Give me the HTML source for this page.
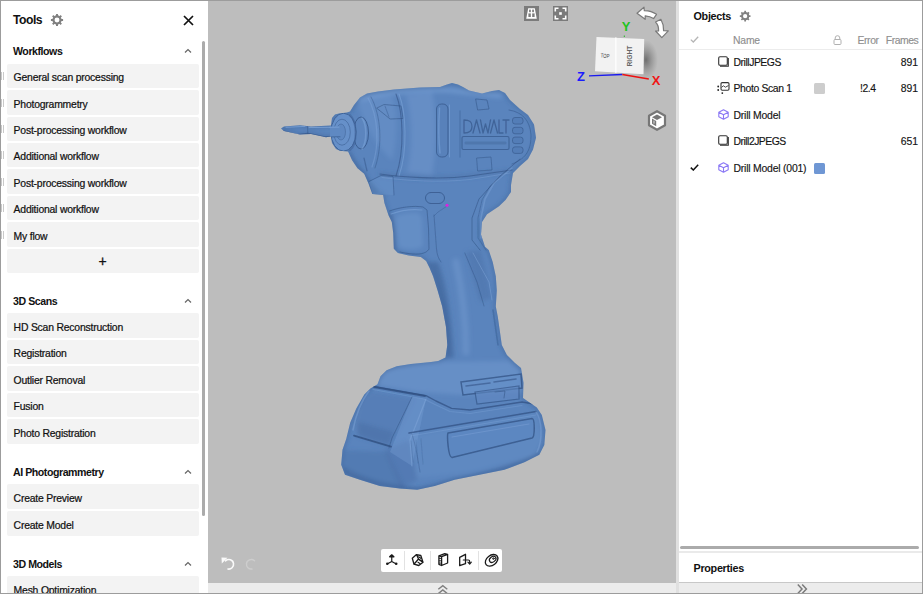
<!DOCTYPE html>
<html><head><meta charset="utf-8">
<style>
*{margin:0;padding:0;box-sizing:border-box}
html,body{width:923px;height:594px;overflow:hidden;background:#fff;font-family:"Liberation Sans",sans-serif;color:#1b1b1b}
.abs{position:absolute}
#frame{position:absolute;left:0;top:0;width:923px;height:594px;border:1px solid #9c9c9c;pointer-events:none;z-index:50}
#left{position:absolute;left:0;top:0;width:208px;height:594px;background:#fff}
.item{position:absolute;left:7px;width:192px;height:24.6px;background:#f3f3f3;border-radius:2px}
.item span{position:absolute;left:6.6px;top:8.6px;font-size:10.4px;letter-spacing:-0.2px;white-space:nowrap;color:#111;-webkit-text-stroke:0.22px #111}
.hdr{position:absolute;left:13px;font-size:10.6px;font-weight:bold;letter-spacing:-0.45px;color:#111;white-space:nowrap}
.chev{position:absolute;left:183.7px;width:8px;height:5px}
.item.noh:before{display:none}
.item:before{content:"";position:absolute;left:-6px;top:8.5px;width:3px;height:8px;border-left:1px solid #c9c9c9;border-right:1px solid #c9c9c9;box-sizing:border-box}
#vp{position:absolute;left:208px;top:0;width:468px;height:583px;background:#bdbdbd;overflow:hidden}
#vpbar{position:absolute;left:208px;top:583px;width:468px;height:11px;background:#ececec}
#divider{position:absolute;left:676px;top:0;width:3px;height:594px;background:#e0e0e0}
#right{position:absolute;left:679px;top:0;width:244px;height:594px;background:#fff}
.row{position:absolute;left:0;width:244px;height:26px}
.row .nm{position:absolute;left:54px;top:7px;font-size:10.4px;letter-spacing:-0.2px;white-space:nowrap;color:#1e1e1e}
.row .fr{position:absolute;right:6px;top:7px;font-size:10.4px;color:#1e1e1e}
</style></head>
<body>
<div id="left">
  <div class="abs" style="left:13px;top:13px;font-size:12.2px;font-weight:bold;letter-spacing:-0.5px;color:#111">Tools</div>
  <svg class="abs gear" style="left:49.9px;top:12.9px" width="14.00" height="14.00" viewBox="0 0 14 14"><circle cx="7" cy="7" r="3.55" fill="none" stroke="#808080" stroke-width="2.2"/><g fill="#808080"><rect x="6" y="0.9" width="2" height="3" rx="0.3" transform="rotate(0 7 7)"/><rect x="6" y="0.9" width="2" height="3" rx="0.3" transform="rotate(45 7 7)"/><rect x="6" y="0.9" width="2" height="3" rx="0.3" transform="rotate(90 7 7)"/><rect x="6" y="0.9" width="2" height="3" rx="0.3" transform="rotate(135 7 7)"/><rect x="6" y="0.9" width="2" height="3" rx="0.3" transform="rotate(180 7 7)"/><rect x="6" y="0.9" width="2" height="3" rx="0.3" transform="rotate(225 7 7)"/><rect x="6" y="0.9" width="2" height="3" rx="0.3" transform="rotate(270 7 7)"/><rect x="6" y="0.9" width="2" height="3" rx="0.3" transform="rotate(315 7 7)"/></g></svg>
  <svg class="abs" style="left:182.5px;top:14.6px" width="11" height="11" viewBox="0 0 11 11"><path d="M1 1L10 10M10 1L1 10" stroke="#111" stroke-width="1.7"/></svg>
  <div class="abs" style="left:202px;top:41px;width:3px;height:475px;background:#ababab;border-radius:2px"></div>

  <div class="hdr" style="top:45px">Workflows</div>
  <svg class="chev" style="top:48px" viewBox="0 0 8 5"><path d="M1 4.5L4 1.5L7 4.5" fill="none" stroke="#666" stroke-width="1.2"/></svg>
  <div class="item" style="top:63.6px"><span>General scan processing</span></div>
  <div class="item" style="top:90px"><span>Photogrammetry</span></div>
  <div class="item" style="top:116.5px"><span>Post-processing workflow</span></div>
  <div class="item" style="top:142.9px"><span>Additional workflow</span></div>
  <div class="item" style="top:169.3px"><span>Post-processing workflow</span></div>
  <div class="item" style="top:195.8px"><span>Additional workflow</span></div>
  <div class="item" style="top:222.2px"><span>My flow</span></div>
  <div class="item noh" style="top:248.6px"><span style="left:91.5px;top:4px;font-size:14px;-webkit-text-stroke:0.3px #141414">+</span></div>

  <div class="hdr" style="top:295px">3D Scans</div>
  <svg class="chev" style="top:298px" viewBox="0 0 8 5"><path d="M1 4.5L4 1.5L7 4.5" fill="none" stroke="#666" stroke-width="1.2"/></svg>
  <div class="item noh" style="top:313.2px"><span>HD Scan Reconstruction</span></div>
  <div class="item noh" style="top:339.7px"><span>Registration</span></div>
  <div class="item noh" style="top:366.2px"><span>Outlier Removal</span></div>
  <div class="item noh" style="top:392.7px"><span>Fusion</span></div>
  <div class="item noh" style="top:419.2px"><span>Photo Registration</span></div>

  <div class="hdr" style="top:466px">AI Photogrammetry</div>
  <svg class="chev" style="top:469px" viewBox="0 0 8 5"><path d="M1 4.5L4 1.5L7 4.5" fill="none" stroke="#666" stroke-width="1.2"/></svg>
  <div class="item noh" style="top:484.4px"><span>Create Preview</span></div>
  <div class="item noh" style="top:511px"><span>Create Model</span></div>

  <div class="hdr" style="top:558px">3D Models</div>
  <svg class="chev" style="top:561px" viewBox="0 0 8 5"><path d="M1 4.5L4 1.5L7 4.5" fill="none" stroke="#666" stroke-width="1.2"/></svg>
  <div class="item noh" style="top:576px"><span>Mesh Optimization</span></div>
</div>

<div id="vp">
<!--DRILL--><svg class="abs" style="left:0;top:0" width="468" height="583" viewBox="208 0 468 583"><defs><clipPath id="cp"><path d="M281,128.5 L284,126.5 L300,125.2 L311,126.5 L331,125.5 L332,118 L335,114.5 L339,113.5 L347,112.5 L350,111.5 L354,105 L360,97.5 L367,93.5 L378,91.5 L394,89.4 L420,87.4 L440,87 L447,84.5 L452,83 L458,84.5 L463,87 L469,90.6 L482,93.5 L492,91 L499,90 L505,93 L510,100 L520,109 L528,115 L534,124.5 L536,137.8 L533,149.5 L528,159 L520,166 L513,173 L511,185 L511,192 L505.5,200 L499,206.3 L487,214.3 L482,222 L481,234.5 L485,246.7 L488.7,250 L492.7,262 L495.8,276.3 L496.8,290.4 L495.8,306.6 L497.8,316.7 L499.8,330.8 L501.8,345 L506.9,355 L515,363 L521,368 L523.5,382.8 L523,398 L536.8,407.5 L541.8,415 L545.5,429.9 L544.3,444.9 L539.3,454.8 L524.4,462.3 L504.4,469.8 L479.5,474.8 L454.6,479.7 L434.7,486 L417.2,489.7 L399.8,488.5 L379.8,486 L359.9,479.7 L345,474.8 L341.2,464.8 L342.5,449.8 L346.2,438.9 L350.2,422.7 L356.3,408.6 L364.3,394.4 L370.4,388.4 L377.5,384.3 L380.5,376.3 L386.6,370.2 L396.7,366.2 L410.8,364.1 L431,362.1 L438.2,361.1 L445.5,357.5 L447.3,345 L446,327 L442.2,306.6 L437.6,290.4 L433.1,276.3 L429.5,267.7 L426.1,261 L420.8,256.9 L408.6,255.6 L397.9,252.9 L393.8,248.8 L393.2,232.7 L391.8,221.9 L388.5,215.2 L384.4,203.1 L383.1,195 L372.3,193.9 L368.3,183.1 L364.2,173.7 L357.5,168.3 L352.1,160.2 L348.1,151.4 L340,150.8 L336,149 L332,143 L331,136.6 L326,137.2 L311,134 L300,134.6 L284,131Z"/></clipPath><filter id="bl2" x="-10%" y="-10%" width="120%" height="120%"><feGaussianBlur stdDeviation="2"/></filter><filter id="bl0" x="-10%" y="-10%" width="120%" height="120%"><feGaussianBlur stdDeviation="0.45"/></filter></defs><path d="M281,128.5 L284,126.5 L300,125.2 L311,126.5 L331,125.5 L332,118 L335,114.5 L339,113.5 L347,112.5 L350,111.5 L354,105 L360,97.5 L367,93.5 L378,91.5 L394,89.4 L420,87.4 L440,87 L447,84.5 L452,83 L458,84.5 L463,87 L469,90.6 L482,93.5 L492,91 L499,90 L505,93 L510,100 L520,109 L528,115 L534,124.5 L536,137.8 L533,149.5 L528,159 L520,166 L513,173 L511,185 L511,192 L505.5,200 L499,206.3 L487,214.3 L482,222 L481,234.5 L485,246.7 L488.7,250 L492.7,262 L495.8,276.3 L496.8,290.4 L495.8,306.6 L497.8,316.7 L499.8,330.8 L501.8,345 L506.9,355 L515,363 L521,368 L523.5,382.8 L523,398 L536.8,407.5 L541.8,415 L545.5,429.9 L544.3,444.9 L539.3,454.8 L524.4,462.3 L504.4,469.8 L479.5,474.8 L454.6,479.7 L434.7,486 L417.2,489.7 L399.8,488.5 L379.8,486 L359.9,479.7 L345,474.8 L341.2,464.8 L342.5,449.8 L346.2,438.9 L350.2,422.7 L356.3,408.6 L364.3,394.4 L370.4,388.4 L377.5,384.3 L380.5,376.3 L386.6,370.2 L396.7,366.2 L410.8,364.1 L431,362.1 L438.2,361.1 L445.5,357.5 L447.3,345 L446,327 L442.2,306.6 L437.6,290.4 L433.1,276.3 L429.5,267.7 L426.1,261 L420.8,256.9 L408.6,255.6 L397.9,252.9 L393.8,248.8 L393.2,232.7 L391.8,221.9 L388.5,215.2 L384.4,203.1 L383.1,195 L372.3,193.9 L368.3,183.1 L364.2,173.7 L357.5,168.3 L352.1,160.2 L348.1,151.4 L340,150.8 L336,149 L332,143 L331,136.6 L326,137.2 L311,134 L300,134.6 L284,131Z" fill="#5a84bd"/><g clip-path="url(#cp)"><g filter="url(#bl2)"><path d="M281,128.5 L284,126.5 L300,125.2 L311,126.5 L331,125.5 L332,118 L335,114.5 L339,113.5 L347,112.5 L350,111.5 L354,105 L360,97.5 L367,93.5 L378,91.5 L394,89.4 L420,87.4 L440,87 L447,84.5 L452,83 L458,84.5 L463,87 L469,90.6 L482,93.5 L492,91 L499,90 L505,93 L510,100 L520,109 L528,115 L534,124.5 L536,137.8 L533,149.5 L528,159 L520,166 L513,173 L511,185 L511,192 L505.5,200 L499,206.3 L487,214.3 L482,222 L481,234.5 L485,246.7 L488.7,250 L492.7,262 L495.8,276.3 L496.8,290.4 L495.8,306.6 L497.8,316.7 L499.8,330.8 L501.8,345 L506.9,355 L515,363 L521,368 L523.5,382.8 L523,398 L536.8,407.5 L541.8,415 L545.5,429.9 L544.3,444.9 L539.3,454.8 L524.4,462.3 L504.4,469.8 L479.5,474.8 L454.6,479.7 L434.7,486 L417.2,489.7 L399.8,488.5 L379.8,486 L359.9,479.7 L345,474.8 L341.2,464.8 L342.5,449.8 L346.2,438.9 L350.2,422.7 L356.3,408.6 L364.3,394.4 L370.4,388.4 L377.5,384.3 L380.5,376.3 L386.6,370.2 L396.7,366.2 L410.8,364.1 L431,362.1 L438.2,361.1 L445.5,357.5 L447.3,345 L446,327 L442.2,306.6 L437.6,290.4 L433.1,276.3 L429.5,267.7 L426.1,261 L420.8,256.9 L408.6,255.6 L397.9,252.9 L393.8,248.8 L393.2,232.7 L391.8,221.9 L388.5,215.2 L384.4,203.1 L383.1,195 L372.3,193.9 L368.3,183.1 L364.2,173.7 L357.5,168.3 L352.1,160.2 L348.1,151.4 L340,150.8 L336,149 L332,143 L331,136.6 L326,137.2 L311,134 L300,134.6 L284,131Z" fill="none" stroke="#34568a" stroke-width="3" opacity="0.45" stroke-linecap="round" stroke-linejoin="round"/><path d="M360,100 C380,92 420,90 445,90 L500,96" fill="none" stroke="#86acdf" stroke-width="4" opacity="0.45" stroke-linecap="round" stroke-linejoin="round"/><path d="M406,95 C412,115 413,150 407,172 L432,175 C437,150 437,112 432,92Z" fill="#86acdf" opacity="0.25"/><path d="M358,104 C366,96 380,94 392,96 C398,110 398,140 392,160 C380,150 366,130 358,104Z" fill="#86acdf" opacity="0.2"/><path d="M350,152 C358,165 368,180 380,192 L372,194 C365,180 356,168 348,152Z" fill="#3a5c90" opacity="0.5"/><path d="M380,174 C410,179 450,180 510,171" fill="none" stroke="#3b5e93" stroke-width="3" opacity="0.35" stroke-linecap="round" stroke-linejoin="round"/><path d="M396,216 C404,213 412,212 419,213 L422,218 L423,246 C418,250 406,250 399,247 L397,232Z" fill="#8ab0e2" opacity="0.22"/><path d="M390,214 L393,232 L394,249" fill="none" stroke="#2f4f80" stroke-width="2.5" opacity="0.5" stroke-linecap="round" stroke-linejoin="round"/><path d="M428,262 C436,280 442,310 446,358 L454,358 C452,320 447,285 438,262Z" fill="#3c5e93" opacity="0.55"/><path d="M456,262 C462,290 466,320 466,352" fill="none" stroke="#86acdf" stroke-width="7" opacity="0.28" stroke-linecap="round" stroke-linejoin="round"/><path d="M466,252 L480,302 L492,298 L481,250Z" fill="#4a70a7" opacity="0.5"/><path d="M384,372 C398,366 425,363 446,362 L508,361 L521,372 L522,392 L462,395 L420,392 L376,385Z" fill="#86acdf" opacity="0.28"/><path d="M372,392 L414,399 L398,430 L389,446 L358,436 L355,426 C357,412 363,398 372,392Z" fill="#3d5f95" opacity="0.15"/><path d="M358,422 L394,432 L389,446 L358,436Z" fill="#3d5f95" opacity="0.3"/><path d="M342,450 L388,452 L405,488 L360,480 L343,472Z" fill="#456aa0" opacity="0.35"/><path d="M410,436 L536,414 L542,440 L534,456 L470,472 L416,478Z" fill="#86acdf" opacity="0.12"/><path d="M384,450 L410,440 L418,480 L400,488Z" fill="#3f6197" opacity="0.25"/><path d="M345,470 C360,480 390,488 420,490 C450,484 500,472 540,455" fill="none" stroke="#34568a" stroke-width="4" opacity="0.35" stroke-linecap="round" stroke-linejoin="round"/></g><g filter="url(#bl0)"><path d="M282,130.5 L297,134.5 L308,133.4 L326,137 L340,136.7" fill="none" stroke="#2f4f80" stroke-width="1.2" opacity="0.6" stroke-linecap="round" stroke-linejoin="round"/><path d="M286,127.3 L305,126.4 M309,127.6 L336,127.2" fill="none" stroke="#86acdf" stroke-width="1" opacity="0.65" stroke-linecap="round" stroke-linejoin="round"/><path d="M307.5,126 L307.8,134" fill="none" stroke="#2f4f80" stroke-width="0.8" opacity="0.5" stroke-linecap="round" stroke-linejoin="round"/><ellipse cx="361" cy="133" rx="7.5" ry="16" fill="#5d86bf" stroke="#2f4f80" stroke-width="0.9" opacity="0.8"/><path d="M362,118 C367,125 367,142 362,149" fill="none" stroke="#86acdf" stroke-width="1.5" opacity="0.45" stroke-linecap="round" stroke-linejoin="round"/><ellipse cx="343.5" cy="132.2" rx="12.6" ry="19" fill="#6690c9" stroke="#3a5d92" stroke-width="0.9"/><path d="M350,115 C357,121 358,144 350,150" fill="none" stroke="#3f6399" stroke-width="2" opacity="0.55" stroke-linecap="round" stroke-linejoin="round"/><ellipse cx="342" cy="132.2" rx="8.3" ry="13" fill="none" stroke="#2f4f80" stroke-width="0.8" opacity="0.55"/><ellipse cx="341" cy="132" rx="4.5" ry="8" fill="#5a83bc" stroke="#2f4f80" stroke-width="0.6" opacity="0.6"/><path d="M330,126.6 L340,126.2 L341,136.8 L330,137.2Z" fill="#5f89c2"/><path d="M326,137 L340,136.8" fill="none" stroke="#2f4f80" stroke-width="1.1" opacity="0.55" stroke-linecap="round" stroke-linejoin="round"/><path d="M330,127.3 L339,127.1" fill="none" stroke="#86acdf" stroke-width="1" opacity="0.6" stroke-linecap="round" stroke-linejoin="round"/><path d="M377,108 L384,104.5 L401,106 L403,118.5 L390,119 L384,114Z" fill="none" stroke="#2f4f80" stroke-width="1" opacity="0.5" stroke-linecap="round" stroke-linejoin="round"/><path d="M385,106 L389,117" fill="none" stroke="#2f4f80" stroke-width="0.9" opacity="0.4" stroke-linecap="round" stroke-linejoin="round"/><path d="M371,97 C381,115 383,145 375,168" fill="none" stroke="#2f4f80" stroke-width="1" opacity="0.4" stroke-linecap="round" stroke-linejoin="round"/><path d="M368,98 C378,116 380,145 372,167" fill="none" stroke="#86acdf" stroke-width="1.3" opacity="0.35" stroke-linecap="round" stroke-linejoin="round"/><path d="M396,94 C403,112 405,150 396,176" fill="none" stroke="#2f4f80" stroke-width="1.1" opacity="0.55" stroke-linecap="round" stroke-linejoin="round"/><path d="M399,94 C406,112 408,150 399,176" fill="none" stroke="#86acdf" stroke-width="1.1" opacity="0.45" stroke-linecap="round" stroke-linejoin="round"/><rect x="436.5" y="104" width="11.5" height="53" rx="5" fill="#5780b9" stroke="#2f4f80" stroke-width="0.9" opacity="0.7"/><path d="M439.5,108 C438.5,125 438.5,140 440,153" fill="none" stroke="#86acdf" stroke-width="1.5" opacity="0.45" stroke-linecap="round" stroke-linejoin="round"/><path d="M449.5,105 L449.5,157" fill="none" stroke="#86acdf" stroke-width="1" opacity="0.45" stroke-linecap="round" stroke-linejoin="round"/><path d="M460,111 L460,157" fill="none" stroke="#2f4f80" stroke-width="0.9" opacity="0.45" stroke-linecap="round" stroke-linejoin="round"/><path d="M476,99 L487,100 L489,109 L478,110Z" fill="none" stroke="#2f4f80" stroke-width="0.9" opacity="0.55" stroke-linecap="round" stroke-linejoin="round"/><path d="M464,120 L464,133 C470,133 472,130 472,126.5 C472,122 470,120 464,120 M473,133 L476.5,120 L480,133 M480.5,120 L483,133 L485.5,124 L488,133 L490.5,120 M490.5,133 L494,120 L497.5,133 M499,120 L499,133 L503,133 M503,120 L509,120 M506,120 L506,133" fill="none" stroke="#2f4f80" stroke-width="1.3" opacity="0.6" stroke-linecap="round" stroke-linejoin="round"/><rect x="462" y="136.5" width="47" height="13" rx="1.5" fill="none" stroke="#2f4f80" stroke-width="1.1" opacity="0.6"/><path d="M466,143 L505,143" fill="none" stroke="#2f4f80" stroke-width="3" opacity="0.25" stroke-linecap="round" stroke-linejoin="round"/><rect x="512.5" y="117.5" width="10.5" height="6.5" rx="2.5" fill="#5079b2" stroke="#2f4f80" stroke-width="0.9" opacity="0.6"/><rect x="512.5" y="127.3" width="10.5" height="6.5" rx="2.5" fill="#5079b2" stroke="#2f4f80" stroke-width="0.9" opacity="0.6"/><rect x="512.5" y="137.1" width="10.5" height="6.5" rx="2.5" fill="#5079b2" stroke="#2f4f80" stroke-width="0.9" opacity="0.6"/><rect x="512.5" y="146.9" width="10.5" height="6.5" rx="2.5" fill="#5079b2" stroke="#2f4f80" stroke-width="0.9" opacity="0.6"/><path d="M509,110 C522,112 530,120 531,135 C531,148 528,158 512,164" fill="none" stroke="#2f4f80" stroke-width="0.9" opacity="0.5" stroke-linecap="round" stroke-linejoin="round"/><path d="M380,174 C400,177 440,180 470,176 L512,170" fill="none" stroke="#2f4f80" stroke-width="1.1" opacity="0.55" stroke-linecap="round" stroke-linejoin="round"/><path d="M382,177.5 C405,180.5 440,183 470,179.5 L510,173" fill="none" stroke="#86acdf" stroke-width="1" opacity="0.35" stroke-linecap="round" stroke-linejoin="round"/><path d="M369,182 L381,176 L393,177 L394,195 L373,194Z" fill="#739bd2" opacity="0.3"/><path d="M369,181.5 L381,175.5 L393,176.5 L394,195" fill="none" stroke="#2f4f80" stroke-width="1" opacity="0.45" stroke-linecap="round" stroke-linejoin="round"/><path d="M364,158 L367,171" fill="none" stroke="#2f4f80" stroke-width="1.2" opacity="0.45" stroke-linecap="round" stroke-linejoin="round"/><path d="M477,158 L491,157 L492,170 L478,171Z" fill="none" stroke="#2f4f80" stroke-width="0.9" opacity="0.5" stroke-linecap="round" stroke-linejoin="round"/><rect x="425.5" y="192.5" width="19" height="11" rx="5.5" fill="#5b84bd" stroke="#2f4f80" stroke-width="1" opacity="0.65"/><path d="M389.5,211 C400,207 414,205.5 423,207 L427,210 L428.5,228 L429,249 C426,254 418,256 400,252" fill="none" stroke="#2f4f80" stroke-width="1" opacity="0.5" stroke-linecap="round" stroke-linejoin="round"/><path d="M391,214 C402,210 414,209 422,210" fill="none" stroke="#86acdf" stroke-width="1.2" opacity="0.45" stroke-linecap="round" stroke-linejoin="round"/><path d="M434,215 L436.5,249 C437,254 438,258 441,262" fill="none" stroke="#2f4f80" stroke-width="0.9" opacity="0.45" stroke-linecap="round" stroke-linejoin="round"/><path d="M446.5,206.5 L438,212 L434,216" fill="none" stroke="#2f4f80" stroke-width="0.8" opacity="0.4" stroke-linecap="round" stroke-linejoin="round"/><path d="M520,159 L500,176 L479,199 L472,218 L472,240 L480,250" fill="none" stroke="#2f4f80" stroke-width="1" opacity="0.5" stroke-linecap="round" stroke-linejoin="round"/><path d="M507,171 L490,186 L482,200 L478,218 L478,238 L486,250" fill="none" stroke="#2f4f80" stroke-width="0.9" opacity="0.4" stroke-linecap="round" stroke-linejoin="round"/><path d="M512,168 L494,183 L485,199 L481,218 L481,238" fill="none" stroke="#86acdf" stroke-width="1.6" opacity="0.35" stroke-linecap="round" stroke-linejoin="round"/><path d="M464.8,253 L477,282 L484,306" fill="none" stroke="#2f4f80" stroke-width="0.9" opacity="0.45" stroke-linecap="round" stroke-linejoin="round"/><path d="M473,253 L489,282 L492,300" fill="none" stroke="#86acdf" stroke-width="1" opacity="0.4" stroke-linecap="round" stroke-linejoin="round"/><path d="M493,310 L498,345" fill="none" stroke="#2f4f80" stroke-width="1.5" opacity="0.35" stroke-linecap="round" stroke-linejoin="round"/><path d="M371,386 L426,395.6 L436,401 L451.6,408.4 L470,410 L522,402 L540,405" fill="none" stroke="#2f4f80" stroke-width="1.4" opacity="0.7" stroke-linecap="round" stroke-linejoin="round"/><path d="M373,389.5 L424,399 L434,404 L450,411.5 L470,413.5 L522,405.5" fill="none" stroke="#86acdf" stroke-width="1.1" opacity="0.3" stroke-linecap="round" stroke-linejoin="round"/><path d="M461,382 L521,374 L522,388 L463,395Z" fill="#668fc8" stroke="#2f4f80" stroke-width="1.5" opacity="0.7"/><path d="M466,386 L490,383 M494,382 L516,379" fill="none" stroke="#2f4f80" stroke-width="1.6" opacity="0.55" stroke-linecap="round" stroke-linejoin="round"/><path d="M475,392 L519,386 L519,399 L477,404Z" fill="#5f88c1" stroke="#2f4f80" stroke-width="1.2" opacity="0.6"/><path d="M495,392 L505,391 L504,398" fill="none" stroke="#2f4f80" stroke-width="1" opacity="0.5" stroke-linecap="round" stroke-linejoin="round"/><path d="M374,387 L425,396" fill="none" stroke="#2f4f80" stroke-width="1.8" opacity="0.75" stroke-linecap="round" stroke-linejoin="round"/><path d="M354,435.6 L391,446.7" fill="none" stroke="#2f4f80" stroke-width="1.8" opacity="0.8" stroke-linecap="round" stroke-linejoin="round"/><path d="M369,391 C362,400 356,414 353,430" fill="none" stroke="#86acdf" stroke-width="1.5" opacity="0.4" stroke-linecap="round" stroke-linejoin="round"/><path d="M412,397 L426,399 L412,466 L390,452Z" fill="#7ea5da" opacity="0.3"/><path d="M426,399 L410,440 L412,466" fill="none" stroke="#86acdf" stroke-width="1.2" opacity="0.4" stroke-linecap="round" stroke-linejoin="round"/><path d="M412,397 L392,438 L389,448" fill="none" stroke="#2f4f80" stroke-width="1" opacity="0.45" stroke-linecap="round" stroke-linejoin="round"/><path d="M412,434 C416,446 418,460 420,472" fill="none" stroke="#2f4f80" stroke-width="0.9" opacity="0.35" stroke-linecap="round" stroke-linejoin="round"/><path d="M409,433 L536,411.5" fill="none" stroke="#2f4f80" stroke-width="1.6" opacity="0.7" stroke-linecap="round" stroke-linejoin="round"/><path d="M410,436 L536,415" fill="none" stroke="#86acdf" stroke-width="1" opacity="0.3" stroke-linecap="round" stroke-linejoin="round"/><path d="M448,433 L532,418.5 C535,418.5 535,437 532,438 L452,457.5 C448,457.5 447,435 448,433Z" fill="#5d87c0" stroke="#2f4f80" stroke-width="1.5" opacity="0.7"/><path d="M452,437 L529,424" fill="none" stroke="#86acdf" stroke-width="1" opacity="0.35" stroke-linecap="round" stroke-linejoin="round"/><path d="M411,441 L413,462 M416,440 L418,463 M421,439 L423,464" fill="none" stroke="#2f4f80" stroke-width="0.8" opacity="0.25" stroke-linecap="round" stroke-linejoin="round"/><path d="M536,412 C542,420 543,440 537,452" fill="none" stroke="#86acdf" stroke-width="1.5" opacity="0.35" stroke-linecap="round" stroke-linejoin="round"/></g></g><circle cx="447" cy="205.3" r="1.5" fill="#e020e0"/></svg><!--/DRILL-->
<!--OVL-->
<svg class="abs" style="left:316px;top:6px" width="15" height="15" viewBox="0 0 15 15"><rect width="15" height="15" fill="#7b7b7b"/><path d="M4.2 2.2H10.8L12.8 12.8H2.2Z" fill="#fff"/><rect x="5.1" y="3.6" width="1.7" height="2.6" fill="#7b7b7b"/><rect x="8.2" y="3.6" width="1.7" height="2.6" fill="#7b7b7b"/><rect x="4.4" y="7.4" width="2.4" height="3.6" fill="#7b7b7b"/><rect x="8.2" y="7.4" width="2.4" height="3.6" fill="#7b7b7b"/></svg>
<svg class="abs" style="left:345px;top:6px" width="15" height="15" viewBox="0 0 15 15"><rect width="15" height="15" fill="#7b7b7b"/><path d="M2.300 5.500V2.300H5.500M9.500 2.300H12.700V5.500M12.700 9.500V12.700H9.500M5.500 12.700H2.300V9.500" fill="none" stroke="#fff" stroke-width="1.600"/><rect x="6.200" y="6.200" width="2.600" height="2.600" fill="#fff"/></svg>
<svg class="abs" style="left:360px;top:0px" width="108" height="95" viewBox="568 0 108 95">
 <defs><radialGradient id="shd" cx="0.5" cy="0.5" r="0.5"><stop offset="0" stop-color="#555" stop-opacity="0.75"/><stop offset="1" stop-color="#777" stop-opacity="0"/></radialGradient></defs>
 <ellipse cx="646" cy="60" rx="12" ry="20" fill="url(#shd)"/>
 <path d="M596.5,37 L644.2,39.1 L643.5,74.2 L595,71.2Z" fill="#f2f2f2"/>
 <path d="M615.8,37.6 L615.8,72.8" stroke="#fcfcfc" stroke-width="1.6"/>
 <text x="605" y="57.8" font-size="6" fill="#444" text-anchor="middle" font-family="Liberation Sans" textLength="9" lengthAdjust="spacingAndGlyphs" transform="rotate(4 605 57)">TOP</text>
 <text x="0" y="0" font-size="6.8" font-weight="bold" fill="#666" text-anchor="middle" font-family="Liberation Sans" textLength="21" lengthAdjust="spacingAndGlyphs" transform="translate(632.3 56) rotate(-90)">RIGHT</text>
 <path d="M589,75.8 L622.3,74.5" stroke="#1a1af0" stroke-width="1.3"/>
 <path d="M622.3,74.5 L648.8,79" stroke="#ee1111" stroke-width="1.3"/>
 <path d="M624.3,35.5 L624.3,37" stroke="#22bb22" stroke-width="1"/>
 <text x="626" y="30.8" font-size="13" font-weight="bold" fill="#1ec31e" text-anchor="middle" font-family="Liberation Sans">Y</text>
 <text x="581" y="80.7" font-size="13" font-weight="bold" fill="#1b1bff" text-anchor="middle" font-family="Liberation Sans">Z</text>
 <text x="656" y="85.2" font-size="13" font-weight="bold" fill="#f01515" text-anchor="middle" font-family="Liberation Sans">X</text>
 <path d="M637,13.2 L644,7.2 L644.3,10.6 C649,10.8 653.500,12.200 656.500,14.300 L653.600,18.600 C651,16.800 648.300,16 645.200,15.800 L645.200,19.300Z" fill="#fff" stroke="#7a7a7a" stroke-width="1.2" stroke-linejoin="round"/>
 <path d="M655.600,22 L660.900,19.300 C662.800,22.800 663.800,26.800 663.600,30.700 L668.300,30.900 L661.800,37.600 L655.600,31 L658.600,30.900 C658.700,27.500 657.800,24.300 655.600,22Z" fill="#fff" stroke="#7a7a7a" stroke-width="1.2" stroke-linejoin="round"/>
</svg>
<svg class="abs" style="left:439px;top:110px" width="20" height="21" viewBox="0 0 20 21"><path d="M10 1.200L18 5.800V15.200L10 19.800L2 15.200V5.800Z" fill="#fff" stroke="#777" stroke-width="2.200" stroke-linejoin="round"/><path d="M10 4.500L15 7.300L10 10L5 7.300Z" fill="#777"/><path d="M5 8.600L9.200 11V16.200L5 13.800Z" fill="#777"/><rect x="6" y="10.600" width="2" height="3" fill="#aaa"/></svg>
<svg class="abs" style="left:12px;top:556px" width="16" height="15" viewBox="0 0 16 15"><path d="M5.500 4.800 C8.500 2.300 13 3.800 13.500 7.500 C14 11 11 13.500 8 13" fill="none" stroke="#fafafa" stroke-width="1.600" stroke-linecap="round"/><path d="M1.500 1.500L7.500 1.800L1.800 7.500Z" fill="#fafafa"/></svg>
<svg class="abs" style="left:35.5px;top:556px" width="16" height="15" viewBox="0 0 16 15"><path d="M10.500 4.800 C7.500 2.300 3 3.800 2.500 7.500 C2 11 5 13.500 8 13" fill="none" stroke="#cdcdcd" stroke-width="1.400" stroke-linecap="round"/></svg>
<div class="abs" style="left:173px;top:549px;width:121px;height:23px;background:#fff;border-radius:2px"></div>
<div class="abs" style="left:196px;top:551px;width:1px;height:19px;background:#e2e2e2"></div>
<div class="abs" style="left:222px;top:551px;width:1px;height:19px;background:#e2e2e2"></div>
<div class="abs" style="left:270px;top:551px;width:1px;height:19px;background:#e2e2e2"></div>
<svg class="abs" style="left:173px;top:549px" width="121" height="23" viewBox="0 0 121 23">
 <g fill="none" stroke="#1a1a1a" stroke-width="1.200" stroke-linecap="round" stroke-linejoin="round">
  <path d="M10.750 7.200V12.400L6.600 14.700 M10.750 12.400L14.900 14.700"/>
  <path d="M8.600 7.800L10.750 5.800L12.900 7.800Z" fill="#1a1a1a"/>
  <circle cx="6.300" cy="14.800" r="1.300" fill="#1a1a1a" stroke="none"/><circle cx="15.200" cy="14.800" r="1.300" fill="#1a1a1a" stroke="none"/>
  <path d="M31.300 9.200L35.500 5.600L39.800 6.500L42 13.300L37.800 16.500L33 15.200Z M35.500 5.600L37.500 10 L42 13.300 M37.500 10L33 15.200" stroke-width="1.300"/>
  <path d="M37.600 7.800L39.700 9.300 M38.500 10.800L40.600 12.400 M37 13.300L39.200 14.700" stroke-width="1.100"/>
  <path d="M60.600 7.700L66.600 5.300V14L60.600 16.500Z M57.900 6.900L63.800 4.700L66.600 5.300 M57.900 6.900L60.600 7.700 M57.900 6.900V15.300L60.600 16.500" stroke-width="1.300"/>
  <path d="M58.400 9.400H60 M58.400 11.800H60 M58.400 14.100H60" stroke-width="0.900"/>
  <path d="M78.700 8.300L84.500 5.300V14.700L78.700 16.700Z" stroke-width="1.300"/>
  <path d="M82.300 11H87.300C88.300 11 88.700 11.600 88.700 12.600V14" stroke-width="1.200"/>
  <path d="M86.900 13.200L88.700 15L90.300 13.200" stroke-width="1.200"/>
  <ellipse cx="110.600" cy="11.300" rx="7" ry="4.900" transform="rotate(-38 110.600 11.300)" stroke-width="1.300"/>
  <ellipse cx="111.700" cy="10.300" rx="3.600" ry="2.600" transform="rotate(-38 111.700 10.300)" stroke-width="1.200"/>
  <circle cx="112.400" cy="9.600" r="0.800" stroke-width="1"/>
 </g>
</svg>
<!--/OVL-->
</div>
<div id="vpbar">
  <svg class="abs" style="left:228.5px;top:0.5px" width="12" height="11" viewBox="0 0 12 11"><path d="M1.3 5.3L5.8 1.6L10.3 5.3M1.3 9.6L5.8 5.9L10.3 9.6" fill="none" stroke="#808080" stroke-width="1.4"/></svg>
</div>
<div id="divider"></div>

<div id="right">
  <div class="abs" style="left:14.5px;top:9.5px;font-size:10.8px;font-weight:bold;letter-spacing:-0.3px;color:#111">Objects</div>
  <svg class="abs gear" style="left:60.2px;top:9.6px" width="12.3" height="12.3" viewBox="0 0 14 14"><circle cx="7" cy="7" r="3.55" fill="none" stroke="#808080" stroke-width="2.2"/><g fill="#808080"><rect x="6" y="0.9" width="2" height="3" rx="0.3" transform="rotate(0 7 7)"/><rect x="6" y="0.9" width="2" height="3" rx="0.3" transform="rotate(45 7 7)"/><rect x="6" y="0.9" width="2" height="3" rx="0.3" transform="rotate(90 7 7)"/><rect x="6" y="0.9" width="2" height="3" rx="0.3" transform="rotate(135 7 7)"/><rect x="6" y="0.9" width="2" height="3" rx="0.3" transform="rotate(180 7 7)"/><rect x="6" y="0.9" width="2" height="3" rx="0.3" transform="rotate(225 7 7)"/><rect x="6" y="0.9" width="2" height="3" rx="0.3" transform="rotate(270 7 7)"/><rect x="6" y="0.9" width="2" height="3" rx="0.3" transform="rotate(315 7 7)"/></g></svg>
  <svg class="abs" style="left:11px;top:36px" width="9" height="7" viewBox="0 0 9 7"><path d="M0.8 3.6L3.3 6L8.2 0.8" fill="none" stroke="#b5b5b5" stroke-width="1.3"/></svg>
  <div class="abs" style="left:54px;top:35px;font-size:10.4px;color:#8f8f8f;-webkit-text-stroke:0.15px #8f8f8f;letter-spacing:-0.2px">Name</div>
  <svg class="abs" style="left:154px;top:35px" width="9" height="10" viewBox="0 0 9 10"><path d="M2.2 4.5V3a2.300 2.300 0 0 1 4.600 0V4.500" fill="none" stroke="#b0b0b0" stroke-width="1"/><rect x="1" y="4.500" width="7" height="5" rx="1" fill="none" stroke="#b0b0b0" stroke-width="1"/></svg>
  <div class="abs" style="left:178.5px;top:35px;font-size:10.4px;color:#8f8f8f;-webkit-text-stroke:0.15px #8f8f8f;letter-spacing:-0.4px">Error</div>
  <div class="abs" style="left:206.8px;top:35px;font-size:10.4px;color:#8f8f8f;-webkit-text-stroke:0.15px #8f8f8f;letter-spacing:-0.45px">Frames</div>
  <div class="abs" style="left:0;top:49px;width:244px;height:1px;background:#ececec"></div>

  <svg class="abs" style="left:39px;top:56px" width="12" height="11" viewBox="0 0 12 11"><rect x="0.7" y="0.7" width="8.600" height="8.600" rx="1.300" fill="#fff" stroke="#333" stroke-width="1.1"/><path d="M2 10.3H10.3V2" fill="none" stroke="#333" stroke-width="1.100"/></svg>
  <div class="abs nm" style="left:54.5px;top:56.5px;font-size:10.4px;color:#141414;-webkit-text-stroke:0.15px #141414;letter-spacing:-0.45px">DrillJPEGS</div>
  <div class="abs" style="right:5px;top:56.5px;font-size:10.4px;color:#141414;-webkit-text-stroke:0.15px #141414">891</div>

  <svg class="abs" style="left:38px;top:82px" width="13" height="12" viewBox="0 0 13 12"><circle cx="1.200" cy="4.500" r="0.900" fill="#222"/><circle cx="1.200" cy="8" r="0.900" fill="#222"/><circle cx="5.300" cy="11.100" r="0.900" fill="#222"/><rect x="4" y="0.600" width="8" height="7.600" rx="1.200" fill="none" stroke="#333" stroke-width="1.100"/><path d="M4.500 5.500L6.300 3.800L8.500 5.200L11.500 3.500" fill="none" stroke="#333" stroke-width="0.9"/></svg>
  <div class="abs" style="left:54.5px;top:83px;font-size:10.4px;color:#141414;-webkit-text-stroke:0.15px #141414;letter-spacing:-0.35px">Photo Scan 1</div>
  <div class="abs" style="left:135px;top:83px;width:11px;height:11px;background:#cdcdcd;border-radius:1.500px"></div>
  <div class="abs" style="left:181px;top:83px;font-size:10.4px;color:#141414;-webkit-text-stroke:0.15px #141414;letter-spacing:-0.4px">!2.4</div>
  <div class="abs" style="right:5px;top:83px;font-size:10.4px;color:#141414;-webkit-text-stroke:0.15px #141414">891</div>

  <svg class="abs" style="left:39px;top:109px" width="11" height="11" viewBox="0 0 11 11"><path d="M5.5 0.700L10.200 3.200V7.800L5.500 10.300L0.800 7.800V3.200Z M0.800 3.200L5.500 5.700L10.200 3.200 M5.500 5.700V10.300" fill="none" stroke="#8b78f5" stroke-width="1.100" stroke-linejoin="round"/></svg>
  <div class="abs" style="left:54.5px;top:109.5px;font-size:10.4px;color:#141414;-webkit-text-stroke:0.15px #141414;letter-spacing:-0.2px">Drill Model</div>

  <svg class="abs" style="left:39px;top:135px" width="12" height="11" viewBox="0 0 12 11"><rect x="0.7" y="0.7" width="8.600" height="8.600" rx="1.300" fill="#fff" stroke="#333" stroke-width="1.1"/><path d="M2 10.3H10.3V2" fill="none" stroke="#333" stroke-width="1.100"/></svg>
  <div class="abs" style="left:54.5px;top:136px;font-size:10.4px;color:#141414;-webkit-text-stroke:0.15px #141414;letter-spacing:-0.5px">Drill2JPEGS</div>
  <div class="abs" style="right:5px;top:136px;font-size:10.4px;color:#141414;-webkit-text-stroke:0.15px #141414">651</div>

  <svg class="abs" style="left:11px;top:164px" width="9" height="7" viewBox="0 0 9 7"><path d="M0.8 3.600L3.300 6L8.200 0.800" fill="none" stroke="#111" stroke-width="1.500"/></svg>
  <svg class="abs" style="left:39px;top:162px" width="11" height="11" viewBox="0 0 11 11"><path d="M5.5 0.700L10.200 3.200V7.800L5.500 10.300L0.800 7.800V3.200Z M0.800 3.200L5.500 5.700L10.200 3.200 M5.500 5.700V10.300" fill="none" stroke="#8b78f5" stroke-width="1.100" stroke-linejoin="round"/></svg>
  <div class="abs" style="left:54.5px;top:162.5px;font-size:10.4px;color:#141414;-webkit-text-stroke:0.15px #141414;letter-spacing:-0.2px">Drill Model (001)</div>
  <div class="abs" style="left:135px;top:162.500px;width:11px;height:11px;background:#6f97d4;border-radius:1.500px"></div>

  <div class="abs" style="left:1px;top:546px;width:239px;height:3px;background:#ababab;border-radius:2px"></div>
  <div class="abs" style="left:0;top:551px;width:244px;height:2px;background:#eaeaea"></div>
  <div class="abs" style="left:14.5px;top:561.5px;font-size:10.8px;font-weight:bold;letter-spacing:-0.3px;color:#111">Properties</div>
  <div class="abs" style="left:0;top:582px;width:244px;height:12px;background:#ececec;border-top:1px solid #c8c8c8"></div>
  <svg class="abs" style="left:117px;top:583.5px" width="12" height="10" viewBox="0 0 12 10"><path d="M1.8 0.6L6 5L1.8 9.4M6.2 0.6L10.4 5L6.2 9.4" fill="none" stroke="#7a7a7a" stroke-width="1.5"/></svg>
</div>
<div id="frame"></div>
</body></html>
